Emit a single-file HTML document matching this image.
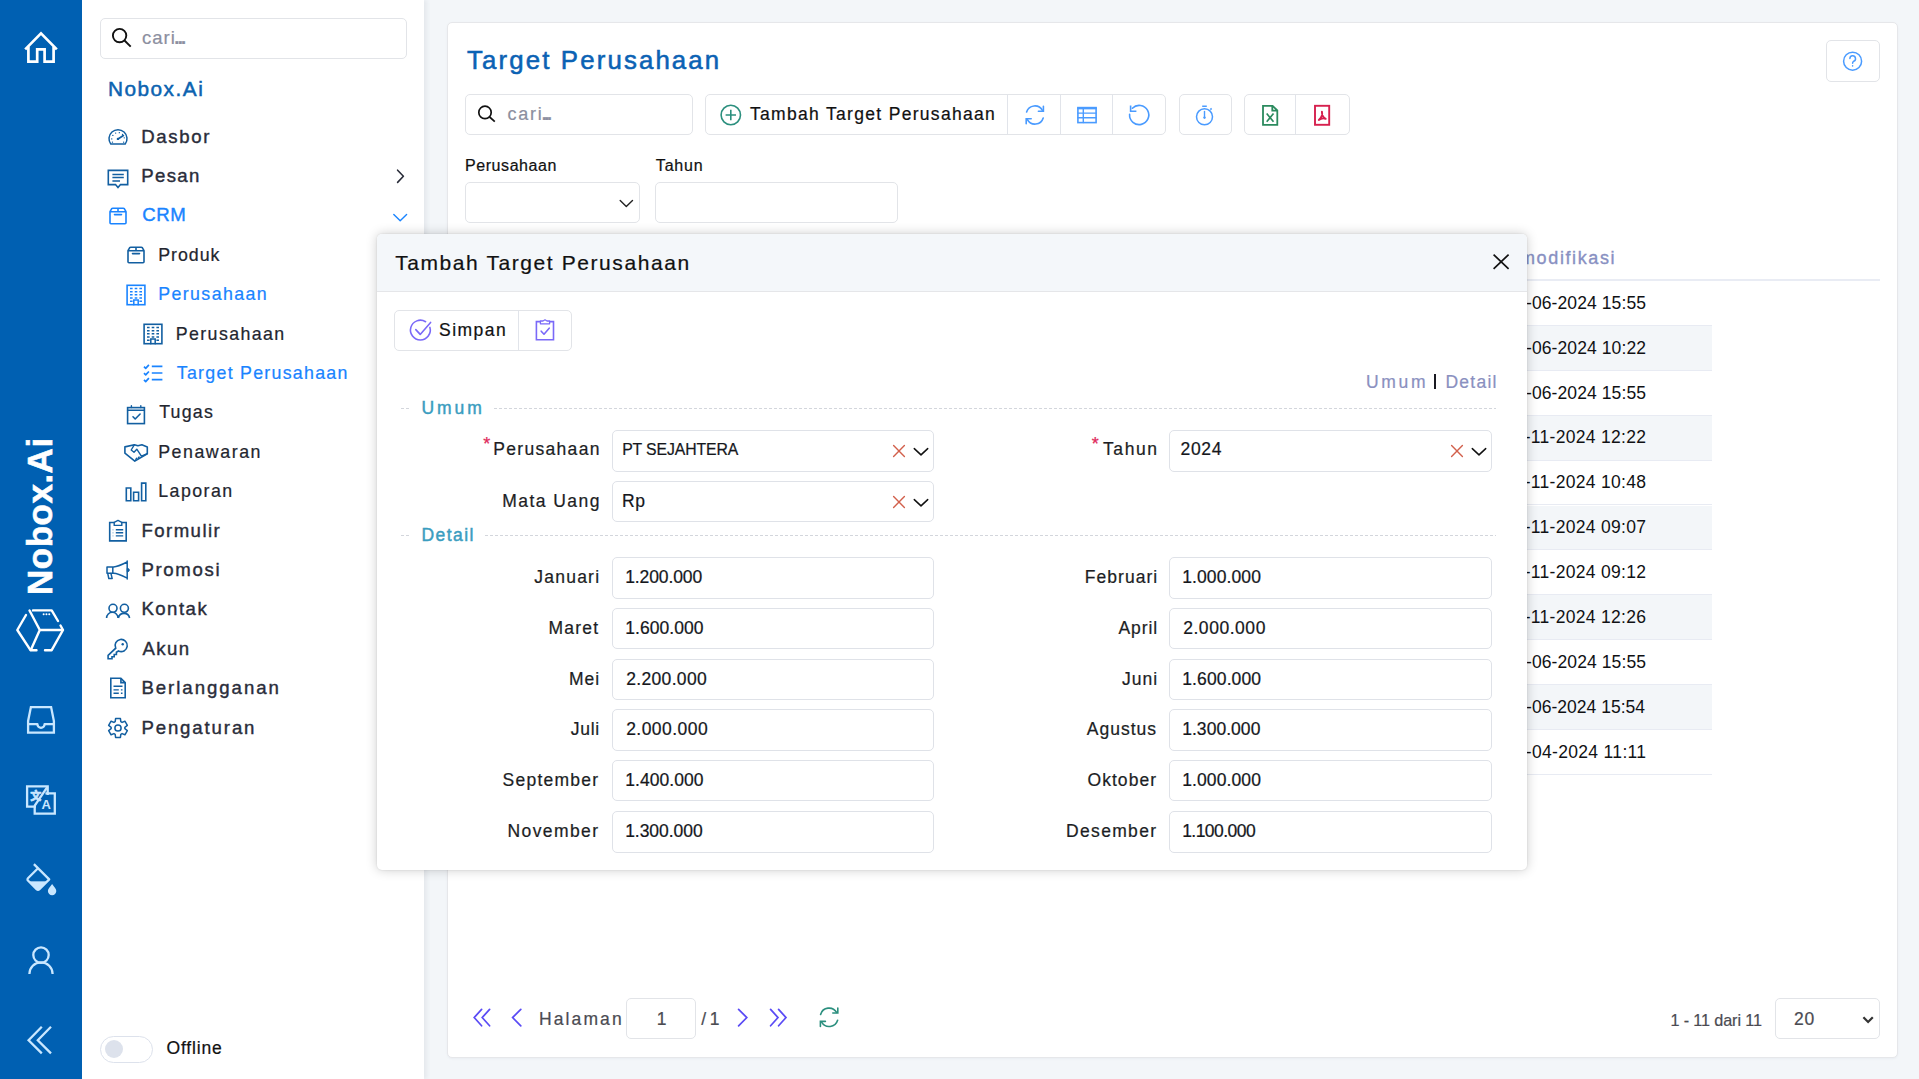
<!DOCTYPE html>
<html lang="id">
<head>
<meta charset="utf-8">
<title>Target Perusahaan</title>
<style>
*{box-sizing:border-box;margin:0;padding:0}
html,body{width:1919px;height:1079px;overflow:hidden;background:#f3f6f9;font-family:"Liberation Sans",sans-serif;color:#212529}
.abs{position:absolute}
.t{position:absolute;white-space:nowrap;line-height:24px;-webkit-text-stroke:.22px currentColor}
svg{position:absolute;overflow:visible;fill:none;stroke:currentColor;stroke-linecap:round;stroke-linejoin:round}
/* rail */
#rail{position:absolute;left:0;top:0;width:82px;height:1079px;background:#0060b2;color:#fff}
/* sidebar */
#side{position:absolute;left:82px;top:0;width:342px;height:1079px;background:#fff;box-shadow:3px 0 4px rgba(60,70,90,.07)}
.box{position:absolute;background:#fff;border:1px solid #e2e4e8;border-radius:5px}
.mi{position:absolute;left:0;width:342px;height:39px}
.mi .t{-webkit-text-stroke:.4px currentColor;color:#2a2d3a}
.mi.s .t{-webkit-text-stroke:.22px currentColor;color:#23262f}
.mi.a .t{color:#1a84ff}
.mi svg{color:#125fa1}
.mi.a svg{color:#1a84ff}
/* card */
#card{position:absolute;left:447px;top:22px;width:1451px;height:1036px;background:#fff;border:1px solid #e6e7ea;border-radius:5px;box-shadow:0 1px 2px rgba(130,140,170,.08)}
/* modal */
#modal{position:absolute;left:377px;top:234px;width:1150px;height:636px;background:#fff;border-radius:5px;box-shadow:0 0 12px rgba(0,0,0,.2),0 0 2px rgba(0,0,0,.12)}
#mhead{position:absolute;left:0;top:0;width:1150px;height:58px;background:#f4f7fa;border-bottom:1px solid #e5e6e9;border-radius:5px 5px 0 0}
.lbl{color:#1c1e24}
.inp{position:absolute;background:#fff;border:1px solid #dfe2e8;border-radius:5px;height:42px}
.inp .t{color:#15171c}
.row{position:absolute;left:0;width:1449px;height:45px;border-bottom:1px solid #e8ebf3}
.row.z{background:#f3f6f9}
.row span{position:absolute;font-size:17.5px;line-height:24px;white-space:nowrap;color:#101114}
.dash{height:1px;background:repeating-linear-gradient(90deg,#d3d6dc 0 3.2px,transparent 3.2px 5px)}
</style>
</head>
<body>
<div id="rail"><svg style="left:22px;top:28px;" width="38" height="38" viewBox="22 28 38 38" stroke-width="2.7"><path d="M25.2 49.4 41 33.4 56.8 49.4" stroke-linecap="butt" stroke-linejoin="miter"/><path d="M28.4 46.5V61.7H37.2V49.4H44.6V61.7H53.6V46.5" stroke-linecap="butt" stroke-linejoin="miter"/></svg>
<div class="abs" style="left:19.6px;top:595px;width:160px;height:40px;transform-origin:0 0;transform:rotate(-90deg);font-weight:bold;font-size:35px;line-height:40px;letter-spacing:.5px;white-space:nowrap;-webkit-text-stroke:.6px #fff">Nobox.Ai</div>
<svg style="left:14px;top:606px;" width="52" height="48" viewBox="14 606 52 48" stroke-width="2.4"><path d="M33 610.4H51.7L58 621M60.5 625.5 63 630 51.7 650.2H45M36.5 650.2H30.5L17.3 630 26 615"/><path d="M29.5 610.5 39.8 630H62.5M39.8 630 30.8 650"/><path d="M43.6 614.3h.1M46.4 614.3h.1M49.2 614.3h.1" stroke-width="1.9"/></svg>
<svg style="left:25px;top:704px;color:#c9e7ff;" width="32" height="32" viewBox="25 704 32 32" stroke-width="2.3"><path d="M28.1 721 30.9 707.1H51.1L53.9 721V732.7H28.1Z" stroke-linejoin="miter"/><path d="M28 724.2H37.4A3.6 3.6 0 0 0 44.6 724.2H54" stroke-linecap="butt"/></svg>
<svg style="left:24px;top:783px;color:#c9e7ff;" width="34" height="34" viewBox="24 783 34 34" stroke-width="2.3"><path d="M47.7 795V786.4H27.1V806.6H36" stroke-linejoin="miter" stroke-linecap="butt"/><path d="M45.4 793.4H54.8V813.6H34.7V806" stroke-linejoin="miter" stroke-linecap="butt"/><path d="M47.4 786.8 34.4 806.2" stroke-width="2.3" stroke-linecap="butt"/><text x="30.2" y="800.2" font-family="'Liberation Sans','Noto Sans CJK SC',sans-serif" font-weight="bold" font-size="11" fill="currentColor" stroke="currentColor" stroke-width=".7">文</text><text x="41.4" y="809.4" font-family="'Liberation Sans',sans-serif" font-weight="bold" font-size="13" fill="currentColor" stroke="none">A</text></svg>
<svg style="left:23px;top:861px;color:#c9e7ff;" width="36" height="36" viewBox="23 861 36 36" stroke-width="2.3"><path d="M33.9 864.1 49.2 879.4 39.4 889.2Q38 890.6 36.6 889.2L28.2 880.8Q26.8 879.4 28.2 878L38 868.2" stroke-linecap="butt"/><path d="M29.4 881.8H46.6L38.8 889.6Q38 890.4 37.2 889.6Z" fill="currentColor" stroke-width=".8"/><path d="M52.1 884C54.5 887.2 56.3 889.2 56.3 891A4.2 4.2 0 0 1 47.9 891C47.9 889.2 49.7 887.2 52.1 884Z" fill="currentColor" stroke="none"/></svg>
<svg style="left:26px;top:944px;color:#c9e7ff;" width="30" height="32" viewBox="26 944 30 32" stroke-width="2.3"><circle cx="41" cy="955.1" r="7.7"/><path d="M29.4 974A11.6 11.6 0 0 1 52.6 974" stroke-linecap="butt"/></svg>
<svg style="left:24px;top:1024px;color:#c9e7ff;" width="30" height="32" viewBox="24 1024 30 32" stroke-width="2.3"><path d="M41.8 1026.8 28.6 1040.2 41.8 1053.4M51 1026.8 37.8 1040.2 51 1053.4" stroke-linecap="butt" stroke-linejoin="miter"/></svg></div>
<div id="side"><div class="box" style="left:18px;top:18px;width:307px;height:41px"></div>
<svg style="left:26px;top:26px;color:#111;" width="26" height="24" viewBox="108 26 26 24" stroke-width="1.9"><circle cx="119.6" cy="35.6" r="6.7"/><path d="M124.5 40.5 130.7 46.7" stroke-linecap="butt"/></svg>
<span class="t" style="left:59.9px;top:26.1px;font-size:18.5px;letter-spacing:1.05px;color:#8c8fa0">cari</span><span class="t" style="left:92.3px;top:26.2px;font-size:18.5px;letter-spacing:-1.74px;color:#8c8fa0;font-weight:bold">...</span>
<span class="t" style="left:25.9px;top:76.6px;font-size:20.8px;letter-spacing:1.50px;color:#0b63b0;-webkit-text-stroke:.5px #0b63b0">Nobox.Ai</span>
<div class="mi" style="top:116.5px"><svg style="left:23.2px;top:7.7px;" width="26" height="26" viewBox="105.2 124.2 26 26" stroke-width="1.6"><g transform="translate(118.2 137.2)"><path d="M-7.2 7.1A9 9 0 1 1 7.2 7.1Z" stroke-width="1.5"/><path d="M-6.3 1.9h.1M-5.2 -1.6h.1M-2.4 -3.9h.1M1.3 -4.3h.1M4.5 -2.5h.1M6.2 0.8h.1M-5.6 5.2h.1M5.6 5.2h.1" stroke-width="1.3"/><path d="M0 1.9 5.4-1.4" stroke-width="1.7"/><circle cx="-.1" cy="1.9" r="1.2" fill="currentColor" stroke="none"/></g></svg><span class="t" style="left:59.2px;top:8.0px;font-size:18.6px;letter-spacing:1.67px;">Dasbor</span></div>
<div class="mi" style="top:155.9px"><svg style="left:23.2px;top:7.7px;" width="26" height="26" viewBox="105.2 163.6 26 26" stroke-width="1.6"><g transform="translate(118.2 176.6)"><path d="M-9.7-6.6H9.7V7.6H2.5L0 10.6-2.5 7.6H-9.7Z" stroke-linejoin="miter"/><path d="M-5.6-2.6H5.8M-5.6 .6H5.8M-5.6 4H2" stroke-width="1.5" stroke-linecap="butt"/></g></svg><span class="t" style="left:59.2px;top:8.0px;font-size:18.6px;letter-spacing:1.38px;">Pesan</span><svg style="left:310px;top:10.1px;color:#2a2d3a;" width="18" height="20" viewBox="392 166 18 20" stroke-width="1.6"><path d="M397.6 170.2 403.4 176.2 397.6 182.4"/></svg></div>
<div class="mi a" style="top:195.3px"><svg style="left:23.2px;top:7.8px;" width="26" height="26" viewBox="105.2 203.1 26 26" stroke-width="1.6"><g transform="translate(118.2 216.1)"><path d="M-8-4.3H8V6.8Q8 7.8 7 7.8H-7Q-8 7.8-8 6.8ZM-8-4.3-6.4-7.2Q-6-7.8-5.2-7.8H5.2Q6-7.8 6.4-7.2L8-4.3M0-7.8V-4.3M-3.5-1.4H3.5"/></g></svg><span class="t" style="left:60.2px;top:8.0px;font-size:18.6px;letter-spacing:0.62px;">CRM</span><svg style="left:308px;top:12.7px;" width="20" height="18" viewBox="390 208 20 18" stroke-width="1.4"><path d="M393.8 214.4 400.2 220.7 406.6 214.4"/></svg></div>
<div class="mi s" style="top:234.7px"><svg style="left:40.6px;top:7.2px;" width="26" height="26" viewBox="122.6 241.9 26 26" stroke-width="1.6"><g transform="translate(135.6 254.9)"><path d="M-8-4.3H8V6.8Q8 7.8 7 7.8H-7Q-8 7.8-8 6.8ZM-8-4.3-6.4-7.2Q-6-7.8-5.2-7.8H5.2Q6-7.8 6.4-7.2L8-4.3M0-7.8V-4.3M-3.5-1.4H3.5"/></g></svg><span class="t" style="left:76.2px;top:8.2px;font-size:17.8px;letter-spacing:0.99px;">Produk</span></div>
<div class="mi s a" style="top:274.1px"><svg style="left:40.7px;top:8.2px;" width="26" height="26" viewBox="122.7 282.3 26 26" stroke-width="1.6"><g transform="translate(135.7 295.3)"><rect x="-8.9" y="-9.7" width="17.8" height="19.4" stroke-linejoin="miter"/><path d="M-6 -6.5h2.6M-1.3 -6.5h2.6M3.4 -6.5h2.6M-6 -3.3h2.6M-1.3 -3.3h2.6M3.4 -3.3h2.6M-6 -0.2h2.6M-1.3 -0.2h2.6M3.4 -0.2h2.6M-6 3h2.6M-1.3 3h2.6M3.4 3h2.6M-6 6.2h2.6M3.4 6.2h2.6" stroke-width="1.5" stroke-linecap="butt"/><path d="M-2.2 9.7V5H2.2V9.7" stroke-width="1.5" stroke-linejoin="miter"/></g></svg><span class="t" style="left:76.2px;top:8.2px;font-size:17.8px;letter-spacing:1.40px;">Perusahaan</span></div>
<div class="mi s" style="top:313.5px"><svg style="left:58px;top:7.8px;" width="26" height="26" viewBox="140 321.3 26 26" stroke-width="1.6"><g transform="translate(153 334.3)"><rect x="-8.9" y="-9.7" width="17.8" height="19.4" stroke-linejoin="miter"/><path d="M-6 -6.5h2.6M-1.3 -6.5h2.6M3.4 -6.5h2.6M-6 -3.3h2.6M-1.3 -3.3h2.6M3.4 -3.3h2.6M-6 -0.2h2.6M-1.3 -0.2h2.6M3.4 -0.2h2.6M-6 3h2.6M-1.3 3h2.6M3.4 3h2.6M-6 6.2h2.6M3.4 6.2h2.6" stroke-width="1.5" stroke-linecap="butt"/><path d="M-2.2 9.7V5H2.2V9.7" stroke-width="1.5" stroke-linejoin="miter"/></g></svg><span class="t" style="left:93.8px;top:8.2px;font-size:17.8px;letter-spacing:1.38px;">Perusahaan</span></div>
<div class="mi s a" style="top:352.9px"><svg style="left:58.3px;top:7.3px;" width="26" height="26" viewBox="140.3 360.2 26 26" stroke-width="1.6"><g transform="translate(153.3 373.2)"><path d="M-1.2 -6.6H9.4M-9 -6.4l1.7 1.7 3.2-3.4M-1.2 0H9.4M-9 0.2l1.7 1.7 3.2-3.4M-1.2 6.7H9.4M-9 6.9l1.7 1.7 3.2-3.4" stroke-width="1.7" stroke-linecap="butt"/></g></svg><span class="t" style="left:94.8px;top:8.2px;font-size:17.8px;letter-spacing:1.27px;">Target Perusahaan</span></div>
<div class="mi s" style="top:392.3px"><svg style="left:40.7px;top:9.3px;" width="26" height="26" viewBox="122.7 401.6 26 26" stroke-width="1.6"><g transform="translate(135.7 414.6)"><rect x="-8.4" y="-7.4" width="16.8" height="16" stroke-linejoin="miter"/><path d="M-8.4-4.8H8.4M-4.6-9.2V-7.4M4.8-9.2V-7.4" stroke-width="1.4"/><path d="M-3 1.8-.8 4 4.1-1"/></g></svg><span class="t" style="left:77.2px;top:8.2px;font-size:17.8px;letter-spacing:1.21px;">Tugas</span></div>
<div class="mi s" style="top:431.7px"><svg style="left:40.5px;top:8.7px;" width="26" height="26" viewBox="122.5 440.4 26 26" stroke-width="1.6"><g transform="translate(135.5 453.4)"><path d="M-11.1-6.1-1.6-8.3 1.9-7.3 5.9-8.3 11.3-6.1V.8L-1.2 8.1-11.1 .2Z"/><path d="M-1.6-8.3-4.8-3 -2-.8 .8-3.8 5.4 3.1M11.3 .6 5.4 3.1M-.2 6.4l.9-1.2M2.2 5.2l.9-1.2" stroke-width="1.4"/></g></svg><span class="t" style="left:76.2px;top:8.2px;font-size:17.8px;letter-spacing:1.54px;">Penawaran</span></div>
<div class="mi s" style="top:471.1px"><svg style="left:40.6px;top:8.2px;" width="26" height="26" viewBox="122.6 479.3 26 26" stroke-width="1.6"><g transform="translate(135.6 492.3)"><path d="M-9.7-4V8.8H-5.2V-4ZM-2.4 .2V8.8H2.6V.2ZM5.6-8.9V8.8H9.8V-8.9Z" stroke-linejoin="miter"/></g></svg><span class="t" style="left:76.2px;top:8.2px;font-size:17.8px;letter-spacing:1.46px;">Laporan</span></div>
<div class="mi" style="top:510.5px"><svg style="left:23.2px;top:7.5px;" width="26" height="26" viewBox="105.2 518 26 26" stroke-width="1.6"><g transform="translate(118.2 531)"><path d="M-3.8-8.5H-8.3V9.9H8.2V-8.5H3.8" stroke-linejoin="miter"/><path d="M-3.8-5.6V-8.6L0-10.6 3.8-8.6V-5.6Z" stroke-width="1.4"/><path d="M-2.2-1.3H5.2M-2.2 1.8H5.2M-2.2 4.9H5.2M-5.2-1.3h.4M-5.2 1.8h.4M-5.2 4.9h.4" stroke-width="1.4" stroke-linecap="butt"/></g></svg><span class="t" style="left:59.4px;top:8.0px;font-size:18.6px;letter-spacing:1.46px;">Formulir</span></div>
<div class="mi" style="top:549.9px"><svg style="left:23.3px;top:7.2px;" width="26" height="26" viewBox="105.3 557.1 26 26" stroke-width="1.6"><g transform="translate(118.3 570.1)"><path d="M9.2-9V9M9.2-8C4-5.4-1-3.2-4.4-3.1H-11V3.3H-4.4C-1 3.4 4 5.6 9.2 8.2M-5.2-3V3.2" stroke-width="1.5"/><path d="M-10.2 3.6-9.2 8.6H-5.8L-7 3.6" stroke-width="1.5"/><path d="M9.6-1.6A1.7 1.7 0 0 1 9.6 1.8Z" fill="currentColor" stroke-width="1"/></g></svg><span class="t" style="left:59.4px;top:8.0px;font-size:18.6px;letter-spacing:1.67px;">Promosi</span></div>
<div class="mi" style="top:589.3px"><svg style="left:23.3px;top:8.6px;" width="26" height="26" viewBox="105.3 597.9 26 26" stroke-width="1.6"><g transform="translate(118.3 610.9)"><circle cx="-5" cy="-2.7" r="4"/><circle cx="6.4" cy="-2.7" r="4"/><path d="M-11.4 7A5.7 5.7 0 0 1 0 7M.4 7A5.7 5.7 0 0 1 11.6 7" stroke-linecap="butt"/></g></svg><span class="t" style="left:59.4px;top:8.0px;font-size:18.6px;letter-spacing:1.48px;">Kontak</span></div>
<div class="mi" style="top:628.7px"><svg style="left:23.3px;top:7.5px;" width="26" height="26" viewBox="105.3 636.2 26 26" stroke-width="1.6"><g transform="translate(118.3 649.2)"><path d="M.5 2A6.1 6.1 0 1 0-2.3-.8L-9.9 6.4V9.8H-6V7.7H-3.8V5.5H-1.6V3.3Z" stroke-linejoin="miter"/><circle cx="4.7" cy="-4.7" r="1.2" fill="currentColor" stroke="none"/></g></svg><span class="t" style="left:60.4px;top:8.0px;font-size:18.6px;letter-spacing:1.45px;">Akun</span></div>
<div class="mi" style="top:668.1px"><svg style="left:23.1px;top:6.9px;" width="26" height="26" viewBox="105.1 675 26 26" stroke-width="1.6"><g transform="translate(118.1 688)"><path d="M-7.2-9.7H2.9L7.2-5.4V9.7H-7.2ZM2.9-9.7V-5.4H7.2" stroke-linejoin="miter"/><path d="M-4.5-1.7H4.5M-4.5 1.9H.8M2.9 1.9H4.5M-4.5 5.3H.8M2.9 5.3H4.5" stroke-width="1.4" stroke-linecap="butt"/></g></svg><span class="t" style="left:59.4px;top:8.0px;font-size:18.6px;letter-spacing:1.97px;">Berlangganan</span></div>
<div class="mi" style="top:707.5px"><svg style="left:23.1px;top:7.5px;" width="26" height="26" viewBox="105.1 715 26 26" stroke-width="1.6"><g transform="translate(118.1 728)"><path d="M2.81 6.30L2.43 9.39L-2.43 9.39L-2.81 6.30L-4.06 5.58L-6.92 6.80L-9.35 2.59L-6.86 0.72L-6.86 -0.72L-9.35 -2.59L-6.92 -6.80L-4.06 -5.58L-2.81 -6.30L-2.43 -9.39L2.43 -9.39L2.81 -6.30L4.06 -5.58L6.92 -6.80L9.35 -2.59L6.86 -0.72L6.86 0.72L9.35 2.59L6.92 6.80L4.06 5.58Z" stroke-width="1.5"/><circle r="3.1" stroke-width="1.5"/></g></svg><span class="t" style="left:59.4px;top:8.0px;font-size:18.6px;letter-spacing:1.88px;">Pengaturan</span></div>
<div class="abs" style="left:18px;top:1036px;width:53px;height:27px;border:1.6px solid #dde2ec;border-radius:14px;background:#fff"><i class="abs" style="left:4px;top:3px;width:18px;height:18px;border-radius:9px;background:#dde2ec"></i></div>
<span class="t" style="left:84.5px;top:1035.9px;font-size:17.5px;letter-spacing:0.83px;color:#111">Offline</span></div>
<div id="card"><span class="t" style="left:19.1px;top:25.0px;font-size:25.8px;letter-spacing:2.13px;color:#0b62b4;-webkit-text-stroke:.55px #0b62b4">Target Perusahaan</span>
<div class="box" style="left:1378px;top:17px;width:54px;height:42px;"></div>
<svg style="left:1393px;top:27px;color:#4a9bff;" width="24" height="23" viewBox="1841 50 24 23" stroke-width="1.5"><circle cx="1852.6" cy="61.2" r="9"/><path d="M1849.9 58.6A2.8 2.8 0 1 1 1853.6 61.3Q1852.6 61.8 1852.6 63.2M1852.6 65.8v.2" stroke-width="1.5"/></svg>
<div class="box" style="left:17px;top:71px;width:228px;height:41px;"></div>
<svg style="left:27px;top:79px;color:#111;" width="24" height="24" viewBox="475 102 24 24" stroke-width="1.7"><circle cx="485" cy="112.4" r="6.2"/><path d="M489.6 117 494.8 121.6" stroke-linecap="butt"/></svg>
<span class="t" style="left:59.5px;top:79.3px;font-size:18px;letter-spacing:1.77px;color:#8c8fa0">cari</span><span class="t" style="left:93.7px;top:79.4px;font-size:18px;letter-spacing:-2.40px;color:#8c8fa0;font-weight:bold">...</span>
<div class="box" style="left:257px;top:71px;width:461px;height:41px;"></div>
<svg style="left:270px;top:79px;color:#2b8f7e;" width="26" height="26" viewBox="718 102 26 26" stroke-width="1.6"><circle cx="730.8" cy="115" r="9.7"/><path d="M725.6 115H736M730.8 109.8V120.2" stroke-linecap="butt"/></svg>
<span class="t" style="left:302.0px;top:79.4px;font-size:17.5px;letter-spacing:1.31px;color:#111">Tambah Target Perusahaan</span>
<i class="abs" style="left:559px;top:72px;width:1px;height:39px;background:#e1e4ea"></i>
<i class="abs" style="left:612px;top:72px;width:1px;height:39px;background:#e1e4ea"></i>
<i class="abs" style="left:664px;top:72px;width:1px;height:39px;background:#e1e4ea"></i>
<svg style="left:574px;top:79px;color:#4a9bff;" width="26" height="26" viewBox="1022 102 26 26" stroke-width="1.6"><path d="M1026.6 112A8.6 8.6 0 0 1 1042.4 110.4M1043.2 118A8.6 8.6 0 0 1 1027.4 119.6"/><path d="M1043.4 106.2V111.2H1038.4M1026.2 123.8V118.8H1031.2" stroke-linejoin="miter"/></svg>
<svg style="left:627px;top:82px;color:#4a9bff;" width="24" height="20" viewBox="1075 105 24 20" stroke-width="1.6"><rect x="1077.9" y="108.4" width="18.2" height="14.2" stroke-linejoin="miter"/><path d="M1077.1 108H1096.9" stroke-width="2.4" stroke-linecap="butt"/><path d="M1083.3 108V122.6M1077.9 113.1H1096.1M1077.9 117.8H1096.1" stroke-width="1.4"/></svg>
<svg style="left:678px;top:79px;color:#4a9bff;" width="26" height="26" viewBox="1126 102 26 26" stroke-width="1.6"><path d="M1129.6 114.4A9.6 9.6 0 1 0 1132.4 108.2"/><path d="M1130.6 105.4V111.2H1136.4" stroke-linejoin="miter" stroke-linecap="butt"/></svg>
<div class="box" style="left:731px;top:71px;width:53px;height:41px;"></div>
<svg style="left:745px;top:80px;color:#4a9bff;" width="24" height="25" viewBox="1193 103 24 25" stroke-width="1.5"><circle cx="1204.5" cy="116.8" r="8"/><path d="M1202.2 106.2H1206.8M1210.4 109.6 1211.6 108.4" stroke-linecap="butt"/><path d="M1204.5 111.4V118" stroke-width="1.4"/><circle cx="1204.5" cy="117.6" r="1.2" fill="currentColor" stroke="none"/></svg>
<div class="box" style="left:796px;top:71px;width:106px;height:41px;"></div>
<i class="abs" style="left:847px;top:72px;width:1px;height:39px;background:#e1e4ea"></i>
<svg style="left:811px;top:80px;color:#2b8a5e;" width="22" height="25" viewBox="1259 103 22 25" stroke-width="1.8"><path d="M1263 105.8H1272.6L1277.3 110.4V124.8H1263ZM1272.3 105.8V110.6H1277.3" stroke-linejoin="miter"/><path d="M1266.7 113.5 1273.5 121.8M1273.5 113.5 1266.7 121.8" stroke-width="1.7" stroke-linecap="butt"/></svg>
<svg style="left:864px;top:80px;color:#d6204e;" width="21" height="25" viewBox="1312 103 21 25" stroke-width="1.9"><rect x="1315" y="105.8" width="14.2" height="19" stroke-linejoin="miter"/><path d="M1321.9 111.6C1322.6 114.4 1321.4 117.8 1318.8 120M1321.9 111.6C1321.8 114.6 1323.6 117.6 1325.7 118.8M1318.8 120C1320.8 118.4 1323.6 117.8 1325.7 118.8" stroke-width="1.9"/></svg>
<span class="t" style="left:17.0px;top:130.7px;font-size:16px;letter-spacing:0.57px;color:#111">Perusahaan</span>
<span class="t" style="left:207.8px;top:130.7px;font-size:16px;letter-spacing:0.83px;color:#111">Tahun</span>
<div class="box" style="left:17px;top:159px;width:175px;height:41px;"></div>
<svg style="left:169px;top:173px;color:#222;" width="19" height="14" viewBox="617 196 19 14" stroke-width="1.4"><path d="M620.2 200.5 626.3 206.5 632.5 200.5"/></svg>
<div class="box" style="left:207px;top:159px;width:243px;height:41px;"></div>
<span class="t" style="left:1072.0px;top:222.5px;font-size:18px;letter-spacing:1.62px;color:#8890c2;-webkit-text-stroke:.35px #8890c2">modifikasi</span>
<span class="t" style="left:auto;right:378px;top:222.7px;font-size:17.5px;letter-spacing:1.3px;color:#8a90c0;-webkit-text-stroke:.35px #8a90c0">Terakhir di</span>
<i class="abs" style="left:18px;top:256px;width:1414px;height:2px;background:#e9ecf4"></i>
<div class="row" style="left:18px;top:257.75px;width:1245.5px;height:44.95px"><span style="left:1040.3px;top:9.9px;letter-spacing:0.10px">12-06-2024 15:55</span></div>
<div class="row z" style="left:18px;top:302.70px;width:1245.5px;height:44.95px"><span style="left:1040.3px;top:9.9px;letter-spacing:0.10px">12-06-2024 10:22</span></div>
<div class="row" style="left:18px;top:347.65px;width:1245.5px;height:44.95px"><span style="left:1040.3px;top:9.9px;letter-spacing:0.10px">12-06-2024 15:55</span></div>
<div class="row z" style="left:18px;top:392.60px;width:1245.5px;height:44.95px"><span style="left:1038.7px;top:9.9px;letter-spacing:0.29px">07-11-2024 12:22</span></div>
<div class="row" style="left:18px;top:437.55px;width:1245.5px;height:44.95px"><span style="left:1038.7px;top:9.9px;letter-spacing:0.29px">08-11-2024 10:48</span></div>
<div class="row z" style="left:18px;top:482.50px;width:1245.5px;height:44.95px"><span style="left:1038.7px;top:9.9px;letter-spacing:0.29px">08-11-2024 09:07</span></div>
<div class="row" style="left:18px;top:527.45px;width:1245.5px;height:44.95px"><span style="left:1038.7px;top:9.9px;letter-spacing:0.29px">08-11-2024 09:12</span></div>
<div class="row z" style="left:18px;top:572.40px;width:1245.5px;height:44.95px"><span style="left:1038.7px;top:9.9px;letter-spacing:0.29px">07-11-2024 12:26</span></div>
<div class="row" style="left:18px;top:617.35px;width:1245.5px;height:44.95px"><span style="left:1040.3px;top:9.9px;letter-spacing:0.10px">12-06-2024 15:55</span></div>
<div class="row z" style="left:18px;top:662.30px;width:1245.5px;height:44.95px"><span style="left:1040.6px;top:9.9px;letter-spacing:0.02px">12-06-2024 15:54</span></div>
<div class="row" style="left:18px;top:707.25px;width:1245.5px;height:44.95px"><span style="left:1039.7px;top:9.9px;letter-spacing:0.32px">03-04-2024 11:11</span></div>
<svg style="left:22px;top:982px;color:#5a4bf5;" width="24" height="25" viewBox="470 1005 24 25" stroke-width="1.7"><path d="M481.6 1009.4 474.2 1017.6 481.6 1025.8M489.6 1009.4 482.2 1017.6 489.6 1025.8" stroke-linejoin="miter"/></svg>
<svg style="left:59px;top:982px;color:#5a4bf5;" width="19" height="25" viewBox="507 1005 19 25" stroke-width="1.7"><path d="M520.8 1009.4 512.6 1017.6 520.8 1025.8" stroke-linejoin="miter"/></svg>
<span class="t" style="left:91.1px;top:984.4px;font-size:17.5px;letter-spacing:2.08px;color:#4b4b52">Halaman</span>
<div class="box" style="left:178px;top:975px;width:70px;height:41px;"></div>
<span class="t" style="left:208.8px;top:984.4px;font-size:17.5px;letter-spacing:0.00px;color:#4b4b52">1</span>
<span class="t" style="left:253.2px;top:984.4px;font-size:17.5px;letter-spacing:-0.61px;color:#4b4b52">/ 1</span>
<svg style="left:285px;top:982px;color:#5a4bf5;" width="19" height="25" viewBox="733 1005 19 25" stroke-width="1.7"><path d="M738.6 1009.4 746.8 1017.6 738.6 1025.8" stroke-linejoin="miter"/></svg>
<svg style="left:318px;top:982px;color:#5a4bf5;" width="24" height="25" viewBox="766 1005 24 25" stroke-width="1.7"><path d="M770.6 1009.4 778 1017.6 770.6 1025.8M778.6 1009.4 786 1017.6 778.6 1025.8" stroke-linejoin="miter"/></svg>
<svg style="left:368px;top:981px;color:#2b8f7e;" width="26" height="26" viewBox="816 1004 26 26" stroke-width="1.6"><path d="M820.6 1014.4A8.8 8.8 0 0 1 836.6 1012.4M837.6 1020.2A8.8 8.8 0 0 1 821.6 1022.2"/><path d="M837.8 1008V1013H832.8M820.4 1026.4V1021.4H825.4" stroke-linejoin="miter"/></svg>
<span class="t" style="left:1222.4px;top:984.8px;font-size:16.2px;letter-spacing:-0.11px;color:#4b4b52">1 - 11 dari 11</span>
<div class="box" style="left:1327px;top:975px;width:105px;height:41px;"></div>
<span class="t" style="left:1346.1px;top:984.3px;font-size:17.5px;letter-spacing:0.57px;color:#4b4b52">20</span>
<svg style="left:1411px;top:989px;color:#333;" width="19" height="16" viewBox="1859 1012 19 16" stroke-width="2.2"><path d="M1863.4 1017.2 1868.1 1022 1872.8 1017.2" stroke-linecap="butt" stroke-linejoin="miter"/></svg></div>
<div id="modal"><div id="mhead"></div><span class="t" style="left:18.2px;top:16.7px;font-size:21px;letter-spacing:1.58px;color:#111">Tambah Target Perusahaan</span>
<svg style="left:1113px;top:17px;color:#111;" width="22" height="22" viewBox="1490 251 22 22" stroke-width="1.7"><path d="M1493.6 254.6 1508.6 268.8M1508.6 254.6 1493.6 268.8" stroke-linecap="butt"/></svg>
<div class="box" style="left:17px;top:76px;width:178px;height:41px"></div>
<i class="abs" style="left:141px;top:77px;width:1px;height:39px;background:#e1e4ea"></i>
<svg style="left:30px;top:83px;color:#7a69f8;" width="27" height="27" viewBox="407 317 27 27" stroke-width="1.6"><path d="M429.9 327.4A9.9 9.9 0 1 1 425.6 321.7"/><path d="M415.8 329.6 420.2 334.4 430.6 322.4"/></svg>
<span class="t" style="left:62.0px;top:83.9px;font-size:17.5px;letter-spacing:1.48px;color:#111">Simpan</span>
<svg style="left:156px;top:82px;color:#7a69f8;" width="25" height="28" viewBox="533 316 25 28" stroke-width="1.6"><path d="M540.4 321.6H536.4V339.8H553.5V321.6H549.6" stroke-linejoin="miter"/><path d="M540.4 323.8V321H543L545 319.8 547 321H549.6V323.8Z" stroke-width="1.3"/><path d="M541.2 331.2 544 334.2 549.2 328.2"/></svg>
<span class="t" style="left:989.0px;top:136.2px;font-size:17.5px;letter-spacing:2.68px;color:#8a90c0">Umum</span>
<i class="abs" style="left:1057.3px;top:140.3px;width:2.2px;height:15px;background:#1a1a22"></i>
<span class="t" style="left:1068.5px;top:136.2px;font-size:17.5px;letter-spacing:1.23px;color:#8a90c0">Detail</span>
<i class="abs dash" style="left:24px;top:174px;width:9.5px"></i>
<i class="abs dash" style="left:116.75px;top:174px;width:1001.75px"></i>
<span class="t" style="left:44.5px;top:162.2px;font-size:17.5px;letter-spacing:2.93px;color:#3a9dc0;-webkit-text-stroke:.45px #3a9dc0">Umum</span>
<span class="t lbl" style="left:116.2px;top:203.4px;font-size:17.5px;letter-spacing:1.32px;">Perusahaan</span><span class="t req" style="left:106.2px;top:197.5px;font-size:18px;letter-spacing:0.00px;color:#e0285a">*</span>
<div class="inp" style="left:235px;top:196px;width:322px;height:41.5px"><span class="t" style="left:9.2px;top:7.0px;font-size:15.8px;letter-spacing:-0.12px;">PT SEJAHTERA</span></div>
<svg style="left:513.6px;top:208.5px;color:#d2604c;" width="16" height="16" viewBox="890.6 442.5 16 16" stroke-width="1.4"><path d="M893.2 445.1 904 455.9M904 445.1 893.2 455.9"/></svg><svg style="left:533.5px;top:208.5px;color:#111;" width="20" height="18" viewBox="910.5 442.5 20 18" stroke-width="1.5"><path d="M913.8 448.1 920.5 454.4 927.2 448.1"/></svg>
<span class="t lbl" style="left:726.0px;top:203.4px;font-size:17.5px;letter-spacing:1.58px;">Tahun</span><span class="t req" style="left:714.8px;top:197.5px;font-size:18px;letter-spacing:0.00px;color:#e0285a">*</span>
<div class="inp" style="left:792px;top:196px;width:323px;height:41.5px"><span class="t" style="left:10.5px;top:6.4px;font-size:17.5px;letter-spacing:0.68px;">2024</span></div>
<svg style="left:1071.6px;top:208.5px;color:#d2604c;" width="16" height="16" viewBox="1448.6 442.5 16 16" stroke-width="1.4"><path d="M1451.2 445.1 1462 455.9M1462 445.1 1451.2 455.9"/></svg><svg style="left:1091.5px;top:208.5px;color:#111;" width="20" height="18" viewBox="1468.5 442.5 20 18" stroke-width="1.5"><path d="M1471.8 448.1 1478.5 454.4 1485.2 448.1"/></svg>
<span class="t lbl" style="left:125.2px;top:254.9px;font-size:17.5px;letter-spacing:1.45px;">Mata Uang</span>
<div class="inp" style="left:235px;top:247px;width:322px;height:41px"><span class="t" style="left:9.0px;top:6.9px;font-size:17.5px;letter-spacing:0.61px;">Rp</span></div>
<svg style="left:513.6px;top:259.5px;color:#d2604c;" width="16" height="16" viewBox="890.6 493.5 16 16" stroke-width="1.4"><path d="M893.2 496.1 904 506.9M904 496.1 893.2 506.9"/></svg><svg style="left:533.5px;top:259.5px;color:#111;" width="20" height="18" viewBox="910.5 493.5 20 18" stroke-width="1.5"><path d="M913.8 499.1 920.5 505.4 927.2 499.1"/></svg>
<i class="abs dash" style="left:24px;top:301px;width:9.5px"></i>
<i class="abs dash" style="left:108px;top:301px;width:1010.5px"></i>
<span class="t" style="left:44.5px;top:288.7px;font-size:17.5px;letter-spacing:1.43px;color:#3a9dc0;-webkit-text-stroke:.45px #3a9dc0">Detail</span>
<span class="t lbl" style="left:157.2px;top:330.9px;font-size:17.5px;letter-spacing:1.25px;">Januari</span>
<div class="inp" style="left:235px;top:323px;width:322px;height:41.5px"><span class="t" style="left:12.2px;top:7.4px;font-size:17.5px;letter-spacing:-0.11px;">1.200.000</span></div>
<span class="t lbl" style="left:707.8px;top:330.9px;font-size:17.5px;letter-spacing:1.03px;">Februari</span>
<div class="inp" style="left:792px;top:323px;width:323px;height:41.5px"><span class="t" style="left:12.2px;top:7.4px;font-size:17.5px;letter-spacing:0.11px;">1.000.000</span></div>
<span class="t lbl" style="left:171.5px;top:381.9px;font-size:17.5px;letter-spacing:1.22px;">Maret</span>
<div class="inp" style="left:235px;top:374px;width:322px;height:40.5px"><span class="t" style="left:12.2px;top:7.4px;font-size:17.5px;letter-spacing:0.05px;">1.600.000</span></div>
<span class="t lbl" style="left:741.5px;top:381.9px;font-size:17.5px;letter-spacing:0.91px;">April</span>
<div class="inp" style="left:792px;top:374px;width:323px;height:40.5px"><span class="t" style="left:13.2px;top:7.4px;font-size:17.5px;letter-spacing:0.54px;">2.000.000</span></div>
<span class="t lbl" style="left:192.0px;top:432.9px;font-size:17.5px;letter-spacing:0.97px;">Mei</span>
<div class="inp" style="left:235px;top:425px;width:322px;height:40.5px"><span class="t" style="left:13.2px;top:7.4px;font-size:17.5px;letter-spacing:0.33px;">2.200.000</span></div>
<span class="t lbl" style="left:744.9px;top:432.9px;font-size:17.5px;letter-spacing:1.04px;">Juni</span>
<div class="inp" style="left:792px;top:425px;width:323px;height:40.5px"><span class="t" style="left:12.2px;top:7.4px;font-size:17.5px;letter-spacing:0.13px;">1.600.000</span></div>
<span class="t lbl" style="left:193.8px;top:482.9px;font-size:17.5px;letter-spacing:0.71px;">Juli</span>
<div class="inp" style="left:235px;top:475px;width:322px;height:41.5px"><span class="t" style="left:13.2px;top:7.4px;font-size:17.5px;letter-spacing:0.45px;">2.000.000</span></div>
<span class="t lbl" style="left:709.8px;top:482.9px;font-size:17.5px;letter-spacing:0.99px;">Agustus</span>
<div class="inp" style="left:792px;top:475px;width:323px;height:41.5px"><span class="t" style="left:12.2px;top:7.4px;font-size:17.5px;letter-spacing:0.04px;">1.300.000</span></div>
<span class="t lbl" style="left:125.5px;top:533.9px;font-size:17.5px;letter-spacing:1.25px;">September</span>
<div class="inp" style="left:235px;top:526px;width:322px;height:40.5px"><span class="t" style="left:12.2px;top:7.4px;font-size:17.5px;letter-spacing:0.05px;">1.400.000</span></div>
<span class="t lbl" style="left:710.5px;top:533.9px;font-size:17.5px;letter-spacing:1.05px;">Oktober</span>
<div class="inp" style="left:792px;top:526px;width:323px;height:40.5px"><span class="t" style="left:12.2px;top:7.4px;font-size:17.5px;letter-spacing:0.11px;">1.000.000</span></div>
<span class="t lbl" style="left:130.5px;top:584.9px;font-size:17.5px;letter-spacing:1.41px;">November</span>
<div class="inp" style="left:235px;top:577px;width:322px;height:41.5px"><span class="t" style="left:12.2px;top:7.4px;font-size:17.5px;letter-spacing:-0.05px;">1.300.000</span></div>
<span class="t lbl" style="left:689.1px;top:584.9px;font-size:17.5px;letter-spacing:1.32px;">Desember</span>
<div class="inp" style="left:792px;top:577px;width:323px;height:41.5px"><span class="t" style="left:12.2px;top:7.4px;font-size:17.5px;letter-spacing:-0.55px;">1.100.000</span></div></div>
</body>
</html>
